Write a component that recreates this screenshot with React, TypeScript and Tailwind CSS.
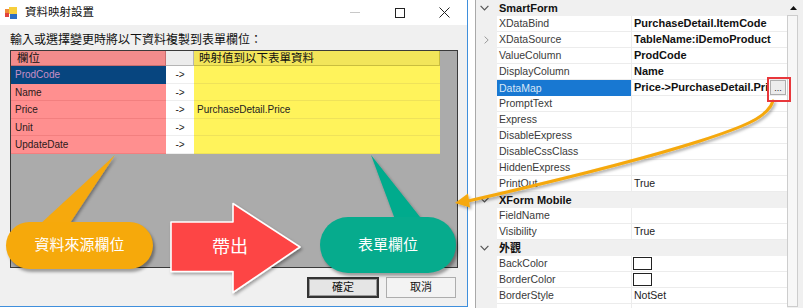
import React from "react";

type PropRow =
  | { cat: string }
  | {
      name: string;
      value?: string;
      bold?: boolean;
      selected?: boolean;
      more?: boolean;
      swatch?: boolean;
      expand?: boolean;
    };

const mapRows = [
  { field: "ProdCode", target: "", selected: true },
  { field: "Name", target: "" },
  { field: "Price", target: "PurchaseDetail.Price" },
  { field: "Unit", target: "" },
  { field: "UpdateDate", target: "" },
];

const propRows: PropRow[] = [
  { cat: "SmartForm" },
  { name: "XDataBind", value: "PurchaseDetail.ItemCode", bold: true },
  { name: "XDataSource", value: "TableName:iDemoProduct", bold: true, expand: true },
  { name: "ValueColumn", value: "ProdCode", bold: true },
  { name: "DisplayColumn", value: "Name", bold: true },
  { name: "DataMap", value: "Price->PurchaseDetail.Pri", bold: true, selected: true, more: true },
  { name: "PromptText" },
  { name: "Express" },
  { name: "DisableExpress" },
  { name: "DisableCssClass" },
  { name: "HiddenExpress" },
  { name: "PrintOut", value: "True" },
  { cat: "XForm Mobile" },
  { name: "FieldName" },
  { name: "Visibility", value: "True" },
  { cat: "外觀" },
  { name: "BackColor", swatch: true },
  { name: "BorderColor", swatch: true },
  { name: "BorderStyle", value: "NotSet" },
  { name: "" },
];

function AppIcon() {
  return (
    <svg width="12" height="12" viewBox="0 0 12 12">
      <rect x="0" y="2" width="4" height="4" fill="#f08a3a" />
      <rect x="4" y="0" width="8" height="7" fill="#f7cf3c" />
      <rect x="0" y="6" width="4" height="4" fill="#e0413d" />
      <rect x="5" y="7" width="7" height="5" fill="#2f6fc4" />
    </svg>
  );
}

function Chevron() {
  return (
    <svg width="9" height="6" viewBox="0 0 9 6">
      <path d="M0.6 0.8 L4.5 4.8 L8.4 0.8" fill="none" stroke="#555" strokeWidth="1.2" />
    </svg>
  );
}

function Dialog() {
  return (
    <div className="flex h-[307px] w-[468px] shrink-0 flex-col border-r border-b border-[#3f8fdc] bg-[#f0f0f0]">
      {/* title bar */}
      <div className="flex h-[25px] items-center bg-white">
        <div className="ml-[5px]">
          <AppIcon />
        </div>
        <span className="ml-[8px] text-[11.5px] text-[#111]">資料映射設置</span>
        <div className="flex-1" />
        <div className="flex h-[25px] w-[45px] items-center justify-center">
          <div className="h-px w-[10px] bg-[#c8c8c8]" />
        </div>
        <div className="flex h-[25px] w-[45px] items-center justify-center">
          <div className="h-[10px] w-[10px] border border-[#222]" />
        </div>
        <div className="flex h-[25px] w-[45px] items-center justify-center">
          <svg width="11" height="11" viewBox="0 0 11 11">
            <path d="M0.5 0.5 L10.5 10.5 M10.5 0.5 L0.5 10.5" stroke="#222" strokeWidth="1" />
          </svg>
        </div>
      </div>

      <div className="flex flex-1 flex-col pl-[10px]">
        <div className="mt-[7px] h-[16px] text-[12px] leading-[16px] text-[#111]">
          輸入或選擇變更時將以下資料複製到表單欄位：
        </div>

        {/* mapping grid */}
        <div className="mt-[2px] flex h-[218px] w-[448px] flex-col border border-[#3a3a3a] bg-[#ababab]">
          <div className="flex h-[15px] text-[11.5px] leading-[14px] text-[#111]">
            <div className="w-[155px] border-r border-b border-[#c86f6f] bg-[#f28c8c] pl-[6px]">欄位</div>
            <div className="w-[28px] border-r border-b border-[#b5b5b5] bg-[#ececec]" />
            <div className="w-[246px] border-r border-b border-[#c9bd3e] bg-[#f2e55a] pl-[5px]">
              映射值到以下表單資料
            </div>
          </div>
          {mapRows.map((r) => (
            <div key={r.field} className="flex h-[17.6px] text-[10px] leading-[17px]">
              <div
                className={
                  r.selected
                    ? "w-[155px] bg-[#07457f] pl-[4px] text-[#c98fc6]"
                    : "w-[155px] border-b border-[#f27f7f] bg-[#ff8f8f] pl-[4px] text-[#2a1a1a]"
                }
              >
                {r.field}
              </div>
              <div className="w-[28px] border-b border-[#eeeeee] bg-white text-center text-[#222]">-&gt;</div>
              <div className="w-[246px] border-b border-[#efe25a] bg-[#fff35b] pl-[3px] text-[#222]">
                {r.target}
              </div>
            </div>
          ))}
        </div>

        <div className="mt-[9px] flex justify-end gap-[7px] pr-[11px] text-[11px] text-[#111]">
          <div className="flex h-[21px] w-[72px] items-center justify-center border-2 border-[#333] bg-[#e5e5e5]">
            <div className="flex h-[17px] w-[68px] items-center justify-center border border-[#9a9a9a]">確定</div>
          </div>
          <div className="flex h-[21px] w-[70px] items-center justify-center border border-[#adadad] bg-[#f3f3f3]">
            取消
          </div>
        </div>
      </div>
    </div>
  );
}

function PropGrid() {
  return (
    <div className="flex h-[308px] w-[328px] shrink-0 border-l border-[#a9a9a9] bg-white">
      <div className="flex min-w-0 flex-1 flex-col overflow-hidden">
        {propRows.map((r, i) =>
          "cat" in r ? (
            <div key={i} className="flex h-[16px] shrink-0 items-center bg-[#f0f0f0]">
              <div className="flex w-[21px] shrink-0 pl-[4px]">
                <Chevron />
              </div>
              <span className="ml-[2px] text-[11px] font-bold text-[#111]">{r.cat}</span>
            </div>
          ) : (
            <div key={i} className="flex h-[16px] shrink-0">
              <div className="flex w-[21px] shrink-0 items-center justify-center bg-[#f0f0f0]">
                {r.expand && (
                  <svg width="5" height="8" viewBox="0 0 5 8">
                    <path d="M0.6 0.6 L4.2 4 L0.6 7.4" fill="none" stroke="#9a9a9a" strokeWidth="1" />
                  </svg>
                )}
              </div>
              <div
                className={
                  r.selected
                    ? "w-[134px] shrink-0 bg-[#1878d2] pl-[2px] text-[10.5px] leading-[16px] text-[#d6e6f7]"
                    : "w-[134px] shrink-0 border-b border-[#ececec] pl-[2px] text-[10.5px] leading-[15px] text-[#3a3a3a]"
                }
              >
                {r.name}
              </div>
              <div className="flex min-w-0 flex-1 items-center border-l border-b border-[#ececec]">
                {r.swatch ? (
                  <div className="ml-[1px] h-[13px] w-[19px] border border-[#222] bg-white" />
                ) : (
                  <span
                    className={
                      (r.bold ? "text-[11px] font-bold text-[#111]" : "text-[10.5px] text-[#222]") +
                      " min-w-0 flex-1 whitespace-nowrap pl-[2px] leading-[15px]"
                    }
                  >
                    {r.value}
                  </span>
                )}
                {r.more && (
                  <div className="mr-px flex h-[15px] w-[16px] shrink-0 items-end justify-center border border-[#adadad] bg-[#ececec] text-[9px] leading-[12px] text-[#222]">
                    ...
                  </div>
                )}
              </div>
            </div>
          )
        )}
      </div>
      {/* scrollbar */}
      <div className="flex w-[16px] shrink-0 flex-col bg-[#f0f0f0]">
        <div className="flex h-[16px] w-[12px] items-center justify-center">
          <svg width="7" height="4" viewBox="0 0 7 4">
            <path d="M0 4 L3.5 0 L7 4 Z" fill="#111" />
          </svg>
        </div>
        <div className="mb-px h-full w-[11px] border border-[#cdcdcd] bg-[#f7f7f7]" />
      </div>
    </div>
  );
}

export default function App() {
  return (
    <div className="relative flex h-[308px] w-[803px] overflow-hidden bg-white [font-family:'Liberation_Sans','Noto_Sans_CJK_TC',sans-serif]">
      <Dialog />
      <div className="w-[7px] shrink-0" />
      <PropGrid />

      {/* annotations */}
      <svg
        className="pointer-events-none absolute top-0 left-0"
        width="803"
        height="308"
        viewBox="0 0 803 308"
      >
        <defs>
          <filter id="sh" x="-20%" y="-20%" width="140%" height="140%">
            <feDropShadow dx="1.5" dy="2" stdDeviation="1.5" floodColor="#000" floodOpacity="0.35" />
          </filter>
        </defs>
        <polygon points="38,226 68,226 115,155" fill="#f6a90b" filter="url(#sh)" />
        <polygon points="396,222 424,222 371,155" fill="#06ab8d" filter="url(#sh)" />
        <path
          d="M171 222 L233 222 L233 203.5 L300 247 L233 292.5 L233 271.5 L171 271.5 Z"
          fill="#fd4444"
          stroke="#ffffff"
          strokeWidth="1.6"
          strokeLinejoin="round"
          filter="url(#sh)"
        />
        <g filter="url(#sh)">
          <path
            d="M773 101 C 768 118, 740 128, 700 141 C 640 160, 560 180, 468 201"
            fill="none"
            stroke="#f5a80a"
            strokeWidth="3"
            strokeLinecap="round"
          />
          <polygon points="455,203 468,193.5 470,207.5" fill="#f5a80a" />
        </g>
      </svg>

      <div className="pointer-events-none absolute top-[77px] left-[767px] h-[25px] w-[24px] border-2 border-[#e8373b]" />

      <div className="pointer-events-none absolute top-[222px] left-[6px] flex h-[47px] w-[147px] items-center justify-center rounded-full bg-[#f6a90b] text-[15px] text-white shadow-[2px_3px_3px_rgba(0,0,0,0.35)]">
        資料來源欄位
      </div>
      <div className="pointer-events-none absolute top-[235px] left-[212px] text-[18px] leading-[24px] text-white">
        帶出
      </div>
      <div className="pointer-events-none absolute top-[217px] left-[320px] flex h-[56px] w-[136px] items-center justify-center rounded-[28px] bg-[#06ab8d] text-[15px] text-white shadow-[2px_3px_3px_rgba(0,0,0,0.35)]">
        表單欄位
      </div>
    </div>
  );
}
